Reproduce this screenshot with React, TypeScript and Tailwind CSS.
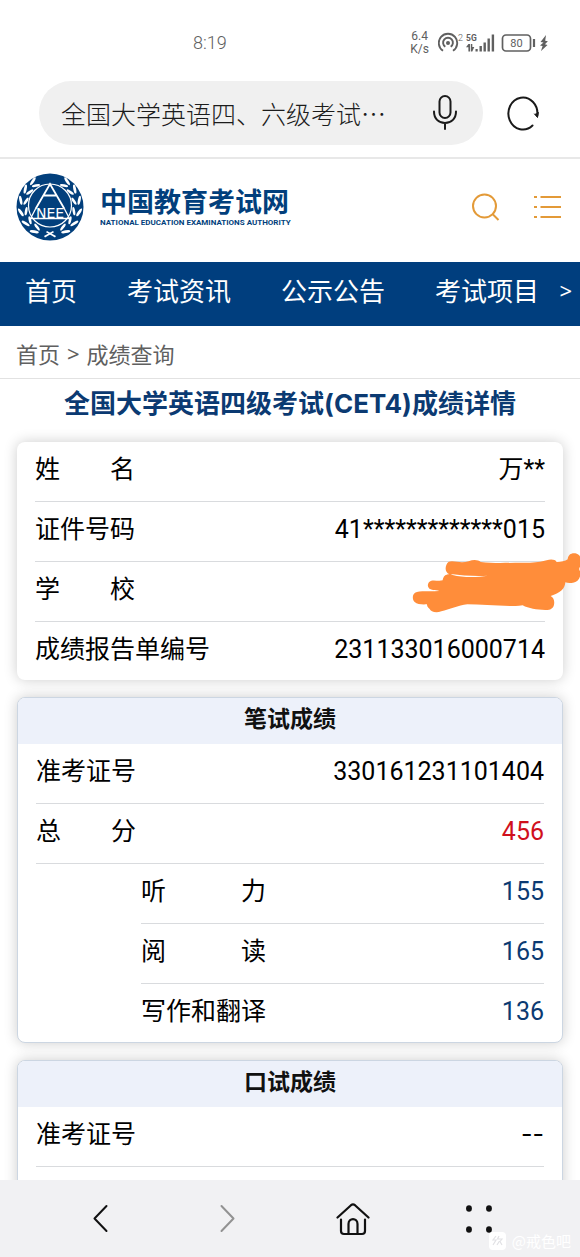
import type { ReactNode } from "react";

const sans = "font-['Inter','Noto_Sans_CJK_SC',sans-serif]";
const numeric = "font-['Roboto','Noto_Sans_CJK_SC',sans-serif]";
const cjk = "font-['Noto_Sans_CJK_SC',sans-serif]";

function StatusBar() {
  return (
    <div className="flex h-[81px] shrink-0 items-start justify-between pt-[30px] pr-[29px] pl-[193px] text-[#606060]">
      <span className="font-['Roboto',sans-serif] text-lg leading-[26px] font-light">8:19</span>
      <div className="flex h-[26px] items-center">
        <span className="mr-[9px] flex flex-col items-center font-['Roboto',sans-serif] text-xs leading-[13px]">
          <span>6.4</span>
          <span>K/s</span>
        </span>
        <svg width="26" height="22" viewBox="0 0 26 22" fill="none" stroke="currentColor" strokeWidth="1.9" aria-hidden="true">
          <circle cx="10" cy="11" r="2" fill="currentColor" stroke="none" />
          <path d="M7.300 14.800a4.900 4.900 0 1 1 5.400 0" />
          <path d="M5 18.700a9.200 9.200 0 1 1 10 0" />
          <text x="20" y="8.500" fontSize="9" fill="currentColor" stroke="none" className="font-['Roboto',sans-serif] font-light">
            2
          </text>
        </svg>
        <svg width="30" height="22" viewBox="0 0 30 22" fill="currentColor" className="ml-[2px]" aria-hidden="true">
          <text x="0" y="9" fontSize="8.500" className="font-['Roboto',sans-serif] font-bold">
            5G
          </text>
          <path d="M0 15.200L2.400 12H4v7.500H2.400V15.200zM4.800 12h1.500v3l2 0L6.300 19.500H4.800z" />
          <rect x="9.500" y="17" width="2.200" height="2.500" />
          <rect x="13.500" y="14" width="2.400" height="5.500" />
          <rect x="17.500" y="10.500" width="2.400" height="9" />
          <rect x="21.500" y="6.500" width="2.400" height="13" />
          <rect x="25.700" y="2.500" width="2.400" height="17" />
        </svg>
        <svg width="50" height="22" viewBox="0 0 50 22" fill="none" stroke="currentColor" className="ml-[5px]" aria-hidden="true">
          <rect x="1.500" y="3" width="28" height="16" rx="3.500" strokeWidth="1.700" />
          <path d="M33 7v8" strokeWidth="2.200" />
          <text x="15.500" y="15" textAnchor="middle" fontSize="11" fill="currentColor" stroke="none" className="font-['Roboto',sans-serif]">
            80
          </text>
          <path d="M45 3l-5.500 7 3 .6-3.500 3 2.600.5L40 19l6.500-6-2.600-.7 3-3-2.700-.5z" fill="currentColor" stroke="none" />
        </svg>
      </div>
    </div>
  );
}

function AddressBar() {
  return (
    <div className="flex shrink-0 items-center border-b-2 border-[#e8e8e8] pr-10 pb-[12px] pl-[39px]">
      <div className="flex h-16 min-w-0 flex-1 items-center justify-between rounded-full bg-[#f0f0f0] pr-[25px] pl-[22px]">
        <button type="button" className={`${cjk} truncate text-[25px] leading-9 font-light text-[#1c1c1c]`}>
          全国大学英语四、六级考试⋯
        </button>
        <button type="button" aria-label="语音搜索" className="shrink-0">
          <svg width="26" height="36" viewBox="0 0 26 36" fill="none" stroke="#1a1a1a" strokeWidth="2" strokeLinecap="round">
            <rect x="7.500" y="1" width="11" height="22" rx="5.500" />
            <path d="M2 16.500c0 7 4.500 11.500 11 11.500s11-4.500 11-11.500M13 28v6" />
          </svg>
        </button>
      </div>
      <button type="button" aria-label="刷新" className="ml-6 shrink-0">
        <svg width="33" height="36" viewBox="0 0 33 36" fill="none" stroke="#1a1a1a" strokeWidth="2" strokeLinecap="round">
          <path d="M25.500 30.500A14.500 16 0 1 1 30.300 20.500" />
          <path d="M27.500 19l3 3.500.8-5" fill="#1a1a1a" strokeWidth="1" />
        </svg>
      </button>
    </div>
  );
}

const leafAngles = [32, 55, 78, 101, 124, 145];

function Laurel() {
  return (
    <g fill="#fff">
      {leafAngles.map((angle) => {
        const radians = (angle * Math.PI) / 180;
        const x = 34 - 27 * Math.sin(radians);
        const y = 33 + 27.5 * Math.cos(radians);
        return (
          <g key={angle} transform={`translate(${x} ${y}) rotate(${angle - 90})`}>
            <ellipse cx="-2.600" cy="-1" rx="1.400" ry="4.600" transform="rotate(-22)" />
            <ellipse cx="2.400" cy="-1" rx="1.300" ry="4.200" transform="rotate(22)" />
          </g>
        );
      })}
      <path d="M37 58l-9 5 1 1.500 9-5.300z" />
    </g>
  );
}

function Emblem() {
  return (
    <svg width="68" height="68" viewBox="0 0 68 68" aria-hidden="true">
      <circle cx="34" cy="34" r="33.500" fill="#023f7c" />
      <Laurel />
      <g transform="translate(68 0) scale(-1 1)">
        <Laurel />
      </g>
      <circle cx="34" cy="32.500" r="21.500" fill="#023f7c" stroke="#fff" strokeWidth="1.200" />
      <path d="M19.500 36L34 11l14.500 25M28 22.500h12" fill="none" stroke="#fff" strokeWidth="1.800" />
      <path d="M19.500 36l-5 9.500h39l-5-9.500" fill="none" stroke="#fff" strokeWidth="1.300" />
      <text x="34" y="45" textAnchor="middle" fontSize="14" fill="#fff" className="font-['DejaVu_Sans',sans-serif]">
        NEE
      </text>
    </svg>
  );
}

function SiteHeader() {
  return (
    <header className="flex h-[103px] items-center justify-between pr-[18px] pb-[8px] pl-4">
      <a href="#" className="flex items-center gap-4 text-[#023f7c]">
        <Emblem />
        <span className="flex flex-col gap-[2px] pt-[2px]">
          <span className={`${cjk} text-[27px] leading-[28px] font-bold`}>中国教育考试网</span>
          <span className="font-['Roboto',sans-serif] text-[8px] leading-[12px] font-bold whitespace-nowrap">
            NATIONAL EDUCATION EXAMINATIONS AUTHORITY
          </span>
        </span>
      </a>
      <div className="flex items-center gap-[34px]">
        <button type="button" aria-label="搜索">
          <svg width="28" height="28" viewBox="0 0 28 28" fill="none" stroke="#e39a38" strokeWidth="2">
            <circle cx="12.500" cy="13" r="11.500" />
            <path d="M20.500 21l6 6" />
          </svg>
        </button>
        <button type="button" aria-label="菜单">
          <svg width="28" height="24" viewBox="0 0 28 24" fill="none" stroke="#e39a38" strokeWidth="2">
            <path d="M0 2h3M6.500 2H27M0 12h3M6.500 12H27M0 22h3M6.500 22H27" />
          </svg>
        </button>
      </div>
    </header>
  );
}

const sections = ["首页", "考试资讯", "公示公告", "考试项目"];

function SiteNav() {
  return (
    <nav className="flex h-16 items-center justify-between bg-[#003e7e] pr-2 pb-[8px] pl-[25px] text-white">
      <ul className={`${cjk} flex gap-[50px] text-[26px] leading-9`}>
        {sections.map((name) => (
          <li key={name} className="shrink-0">
            <a href="#">{name}</a>
          </li>
        ))}
      </ul>
      <button type="button" aria-label="更多栏目" className="font-['Noto_Sans',sans-serif] text-[22px] leading-9">
        &gt;
      </button>
    </nav>
  );
}

function Card({ title, children }: { title?: string; children: ReactNode }) {
  return (
    <section
      className={`rounded-lg bg-white shadow-[0_0_14px_rgba(0,0,0,0.2)] ${title ? "overflow-hidden border border-[#ccd6e2]" : ""}`}
    >
      {title && (
        <h2 className={`${cjk} bg-[#edf1fa] pt-[2px] pb-[10px] text-center text-[23px] leading-[34px] font-bold text-[#111]`}>
          {title}
        </h2>
      )}
      <dl className="px-[18px]">{children}</dl>
    </section>
  );
}

type RowProps = {
  label: string;
  value?: string;
  tone?: "plain" | "total" | "part" | "blank";
  last?: boolean;
  children?: ReactNode;
};

const tones = {
  plain: `${numeric} text-black`,
  total: `${numeric} text-[#d0101c]`,
  part: `${numeric} text-[#0b3a72]`,
  blank: `${sans} text-black`,
};

function Row({ label, value, tone = "plain", last, children }: RowProps) {
  return (
    <div
      className={`relative flex items-baseline justify-between pt-[7px] text-[25px] leading-9 ${last ? "h-[58px]" : "h-[60px] border-b border-[#d9dbde]"} ${tone === "part" ? "ml-[105px]" : ""}`}
    >
      <dt className={`${cjk} whitespace-pre text-black`}>{label}</dt>
      <dd className={tones[tone]}>
        {value}
        {children}
      </dd>
    </div>
  );
}

function Scribble() {
  return (
    <svg width="168" height="61" viewBox="96 36 504 183" fill="#ff8d3a" className="absolute -top-[10px] -right-[35px]" aria-hidden="true">
      <path d="M216 64C232 66 250 69 266 64C280 58 294 59 302 66C345 71 390 68 425 68C460 69 480 67 500 61C512 57 526 58 530 66C542 66 556 64 563 58C564 44 574 38 586 40C596 42 602 49 602 57V78C597 84 596 88 600 94C604 112 594 126 579 128C570 130 562 129 556 127C555 146 540 160 512 168C522 174 524 184 522 194C520 206 508 211 496 210C470 209 446 206 428 196C416 199 404 198 394 198C345 197 300 193 262 193C235 196 208 209 184 214C166 220 152 214 149 207C143 203 141 198 141 193C126 194 112 193 104 186C96 178 97 164 105 158C117 151 141 155 178 153C165 150 153 151 147 145C140 137 144 125 154 122C165 120 177 124 188 121C190 109 196 103 208 103C196 97 195 85 199 75C202 67 207 64 216 64Z" />
      <path d="M212 102C246 107 290 109 324 107C290 113 248 113 218 105Z" fill="#fff" />
    </svg>
  );
}

function BottomBar() {
  return (
    <nav className="relative flex h-[77px] shrink-0 items-center justify-around bg-[#f1f1f3] px-[38px]">
      <button type="button" aria-label="后退" className="flex w-[126px] justify-center">
        <svg width="16" height="30" viewBox="0 0 16 30" fill="none" stroke="#111" strokeWidth="2" strokeLinecap="round" strokeLinejoin="round">
          <path d="M13.500 2L1.500 14.500l12 12.500" />
        </svg>
      </button>
      <button type="button" aria-label="前进" className="flex w-[126px] justify-center">
        <svg width="16" height="30" viewBox="0 0 16 30" fill="none" stroke="#929292" strokeWidth="2" strokeLinecap="round" strokeLinejoin="round">
          <path d="M2.500 2l12 12.500L2.500 27" />
        </svg>
      </button>
      <button type="button" aria-label="主页" className="flex w-[126px] justify-center">
        <svg width="34" height="34" viewBox="0 0 34 34" fill="none" stroke="#111" strokeWidth="2.200" strokeLinecap="round" strokeLinejoin="round">
          <path d="M1.500 15.500L15 3.200q2-1.600 4 0l13.500 12.300" />
          <path d="M5 17.500V29q0 3 3 3h18q3 0 3-3V17.500M12.500 31.500V22c0-6.500 9-6.500 9 0v9.500" />
        </svg>
      </button>
      <button type="button" aria-label="工具" className="flex w-[126px] justify-center">
        <svg width="28" height="28" viewBox="0 0 28 28" fill="#111">
          <ellipse cx="4" cy="3.500" rx="2.900" ry="3.300" />
          <ellipse cx="24" cy="3.500" rx="2.900" ry="3.300" />
          <ellipse cx="4" cy="24.500" rx="2.900" ry="3.300" />
          <ellipse cx="24" cy="24.500" rx="2.900" ry="3.300" />
        </svg>
      </button>
      <div className={`${cjk} absolute right-[9px] bottom-[5px] flex items-center gap-[6px] text-[15px] leading-[22px] text-white`}>
        <svg width="17" height="18" viewBox="0 0 17 18" aria-hidden="true">
          <rect width="17" height="18" rx="4" fill="#fff" />
          <path d="M7 4L4 8h3l-3 5M10 4L8.500 7H13l-2 2.500 2 3.500M10.500 9L8 13" fill="none" stroke="#e2e2e5" strokeWidth="1.200" />
        </svg>
        @戒色吧
      </div>
    </nav>
  );
}

export default function App() {
  return (
    <div className="flex h-dvh flex-col bg-white">
      <StatusBar />
      <AddressBar />
      <main className="min-h-0 flex-1 overflow-x-hidden overflow-y-auto [scrollbar-width:none]">
        <SiteHeader />
        <SiteNav />
        <p className={`${cjk} flex gap-[7px] border-b border-[#e2e2e2] px-4 pt-[11px] pb-[9px] text-[22px] leading-8 text-[#606060]`}>
          <a href="#">首页</a>
          <span className="font-['Noto_Sans',sans-serif]">&gt;</span>
          <a href="#">成绩查询</a>
        </p>
        <h1 className={`${sans} pt-[7px] text-center text-[26px] leading-9 font-bold text-[#0b3a72]`}>
          全国大学英语四级考试(CET4)成绩详情
        </h1>
        <div className="flex flex-col gap-[17px] px-[17px] pt-5 pb-6">
          <Card>
            <Row label="姓　　名" value="万**" />
            <Row label="证件号码" value="41*************015" />
            <Row label="学　　校">
              <Scribble />
            </Row>
            <Row label="成绩报告单编号" value="231133016000714" last />
          </Card>
          <Card title="笔试成绩">
            <Row label="准考证号" value="330161231101404" />
            <Row label="总　　分" value="456" tone="total" />
            <Row label="听　　　力" value="155" tone="part" />
            <Row label="阅　　　读" value="165" tone="part" />
            <Row label="写作和翻译" value="136" tone="part" last />
          </Card>
          <Card title="口试成绩">
            <Row label="准考证号" value="--" tone="blank" />
            <div className="h-[60px]" />
          </Card>
        </div>
      </main>
      <BottomBar />
    </div>
  );
}
